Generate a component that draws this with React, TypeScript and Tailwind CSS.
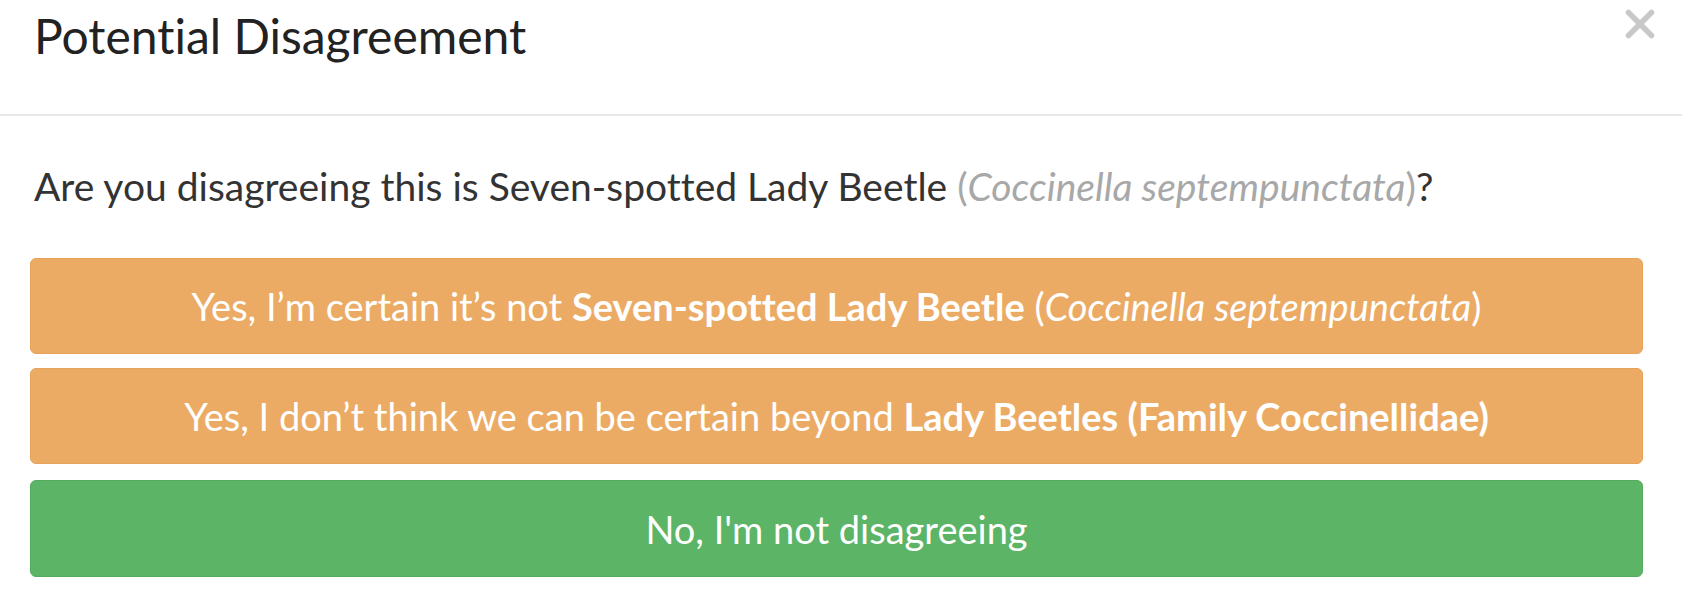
import { X } from 'lucide-react';

const Taxon = ({ name, sci, muted }: { name?: string; sci: string; muted?: boolean }) => (
  <>
    {name && <span>{name} </span>}
    <span className={muted ? 'text-[#a8a8a8]' : ''}>
      (<i>{sci}</i>)
    </span>
  </>
);

const DisagreementModal = () => {
  return (
    <div className="w-[1682px] h-[604px] bg-white text-[#333] font-['Lato','Noto_Sans',sans-serif] [font-variant-ligatures:none]">
      <div className="h-[116px] border-b-2 border-[#e8e8e8] flex items-start justify-between pl-[34px] pr-[19px]">
        <h1 className="text-[48px] leading-none pt-[12px] text-[#222]">Potential Disagreement</h1>
        <button className="mt-[1px] text-[#c8c8c8]">
          <X className="h-[46px] w-[46px]" strokeWidth={2.9} />
        </button>
      </div>

      <div className="pl-[30px] pr-[39px] pt-[51px]">
        <p className="text-[39px] leading-none pl-[4px] mb-[52px]">
          Are you disagreeing this is Seven-spotted Lady Beetle{' '}
          <Taxon sci="Coccinella septempunctata" muted />?
        </p>

        <div className="flex flex-col gap-[14px] text-white text-[38px] leading-none">
          <button className="h-[96px] w-full rounded-[6px] bg-[#ecab65] border border-[#e8a25a]">
            Yes, I’m certain it’s not <b className="font-bold">Seven-spotted Lady Beetle</b>{' '}
            <Taxon sci="Coccinella septempunctata" />
          </button>
          <button className="h-[96px] w-full rounded-[6px] bg-[#ecab65] border border-[#e8a25a]">
            Yes, I don’t think we can be certain beyond{' '}
            <b className="font-bold">Lady Beetles (Family Coccinellidae)</b>
          </button>
          <button className="h-[97px] mt-[2px] w-full rounded-[6px] bg-[#5cb466] border border-[#55ab5e]">
            No, I'm not disagreeing
          </button>
        </div>
      </div>
    </div>
  );
};

export default DisagreementModal;
